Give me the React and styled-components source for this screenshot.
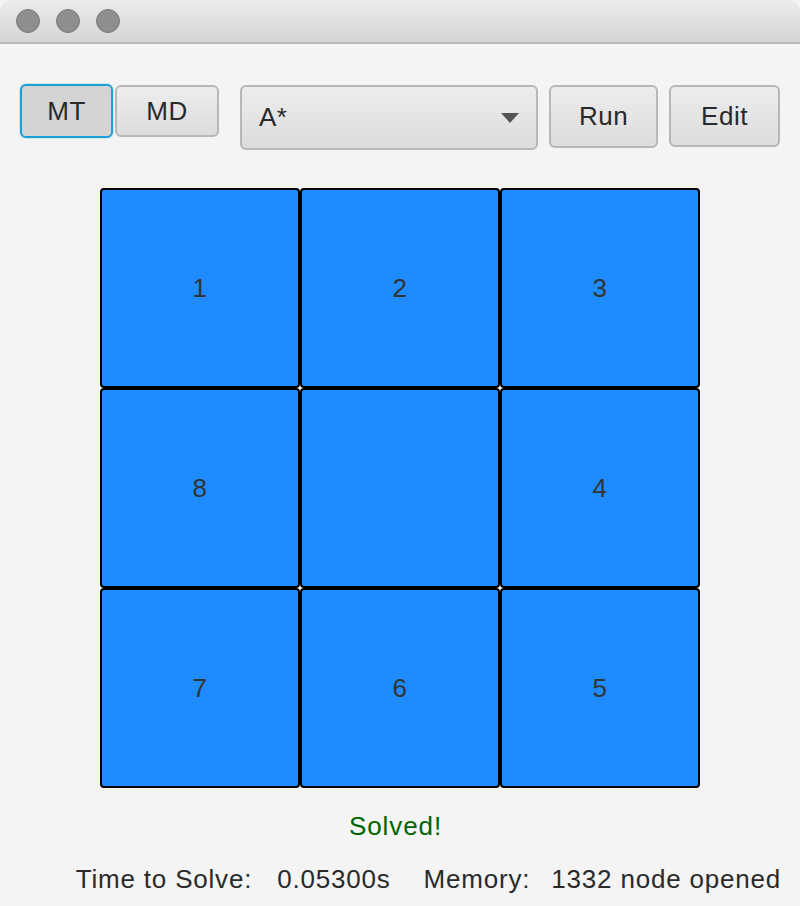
import React from "react";
import styled, { createGlobalStyle } from "styled-components";

const Global = createGlobalStyle`
  html, body { margin: 0; padding: 0; background: #f4f4f4; }
  body { font-family: "Liberation Sans", Arial, sans-serif; }
`;

const Window = styled.div`
  width: 800px;
  height: 906px;
  background: #f4f4f4;
  display: flex;
  flex-direction: column;
  overflow: hidden;
  font-size: 26px;
  letter-spacing: 0.5px;
  color: #2a2a2a;
`;

const TitleBar = styled.div`
  height: 42px;
  flex: none;
  display: flex;
  align-items: center;
  gap: 16px;
  padding-left: 16px;
  background: linear-gradient(#ececec, #d5d5d5);
  border-bottom: 2px solid #b8b8b8;
  border-top-left-radius: 10px;
  border-top-right-radius: 10px;
`;

const Light = styled.span`
  width: 22px;
  height: 22px;
  border-radius: 50%;
  background: #8e8d90;
  border: 1px solid #7a797c;
`;

const Toolbar = styled.div`
  display: flex;
  align-items: flex-start;
  padding: 40px 0 0 20px;
`;

const Toggle = styled.div`
  display: flex;
  gap: 2px;
  margin-right: 21px;
`;

const Button = styled.button`
  box-sizing: border-box;
  width: ${(p) => p.$w}px;
  height: ${(p) => p.$h}px;
  margin-right: ${(p) => p.$mr || 0}px;
  margin-top: ${(p) => p.$mt || 0}px;
  border-radius: 6px;
  border: 2px solid ${(p) => (p.$active ? "#1d9fd6" : "#b7b7b7")};
  background: ${(p) =>
    p.$active ? "#d4d4d4" : "linear-gradient(#ededed, #dcdcdc)"};
  box-shadow: ${(p) => (p.$active ? "0 0 0 1px #cbe7f3" : "none")};
  font-family: inherit;
  font-size: 26px;
  letter-spacing: 0.5px;
  color: #2a2a2a;
  padding: 0;
  display: flex;
  align-items: center;
  justify-content: center;
`;

const Combo = styled.div`
  box-sizing: border-box;
  width: 298px;
  height: 65px;
  margin-right: 11px;
  margin-top: 1px;
  border-radius: 6px;
  border: 2px solid #b7b7b7;
  background: linear-gradient(#ededed, #dcdcdc);
  display: flex;
  align-items: center;
  justify-content: space-between;
  padding: 0 17px 0 17px;
`;

const Arrow = styled.span`
  width: 0;
  height: 0;
  border-left: 9px solid transparent;
  border-right: 9px solid transparent;
  border-top: 10px solid #555;
`;

const Board = styled.div`
  display: grid;
  grid-template-columns: repeat(3, 200px);
  grid-template-rows: repeat(3, 200px);
  margin: 38px 0 0 100px;
  width: 600px;
`;

const Tile = styled.div`
  box-sizing: border-box;
  border: 2px solid #000;
  border-radius: 4px;
  background: #1e8cff;
  display: flex;
  align-items: center;
  justify-content: center;
  color: #333;
  font-size: 26px;
`;

const Status = styled.div`
  color: #006400;
  text-align: center;
  margin: 23px 0 0 -9px;
  line-height: 30px;
  letter-spacing: 0.9px;
`;

const Stats = styled.div`
  display: flex;
  justify-content: flex-end;
  padding-right: 19px;
  margin-top: 23px;
  line-height: 30px;
  color: #2a2a2a;
  letter-spacing: 0.8px;
`;

const StatText = styled.span`
  margin-left: ${(p) => p.$ml || 0}px;
  white-space: nowrap;
`;

const tiles = ["1", "2", "3", "8", "", "4", "7", "6", "5"];

export default function App() {
  return (
    <Window>
      <Global />
      <TitleBar>
        <Light />
        <Light />
        <Light />
      </TitleBar>
      <Toolbar>
        <Toggle>
          <Button $w={93} $h={54} $active>MT</Button>
          <Button $w={104} $h={52} $mt={1}>MD</Button>
        </Toggle>
        <Combo>
          <span>A*</span>
          <Arrow />
        </Combo>
        <Button $w={109} $h={63} $mr={11} $mt={1}>Run</Button>
        <Button $w={111} $h={62} $mt={1}>Edit</Button>
      </Toolbar>
      <Board>
        {tiles.map((t, i) => (
          <Tile key={i}>{t}</Tile>
        ))}
      </Board>
      <Status>Solved!</Status>
      <Stats>
        <StatText>Time to Solve:</StatText>
        <StatText $ml={25}>0.05300s</StatText>
        <StatText $ml={33}>Memory:</StatText>
        <StatText $ml={21}>1332 node opened</StatText>
      </Stats>
    </Window>
  );
}
